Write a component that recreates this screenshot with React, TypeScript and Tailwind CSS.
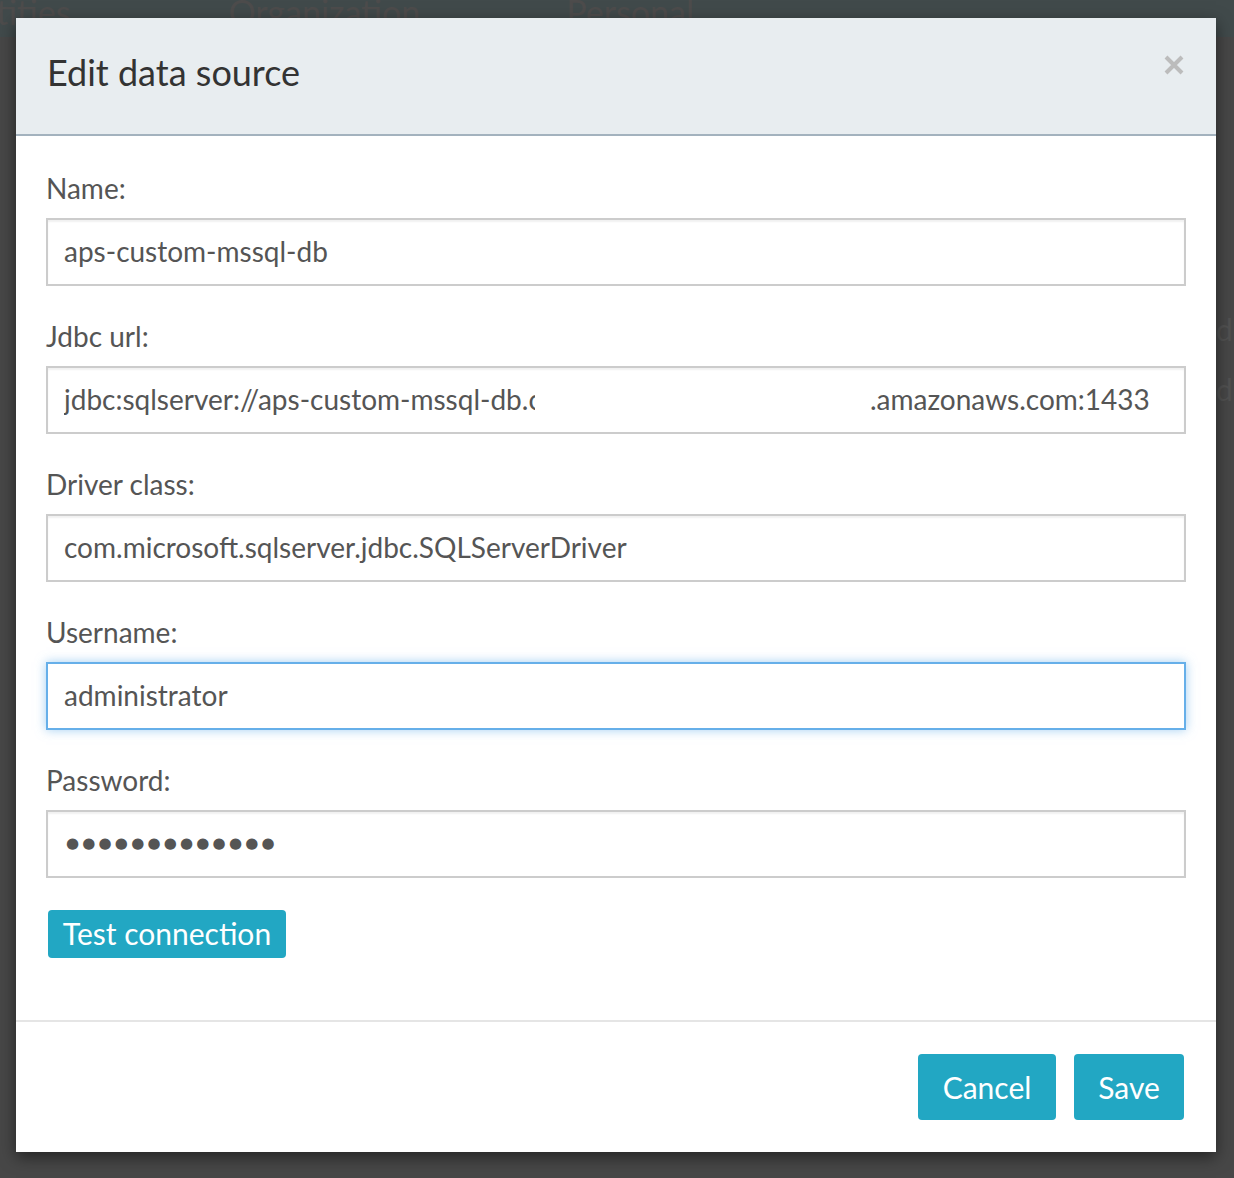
import React from 'react';

const font = { fontFamily: 'Lato, "Open Sans", sans-serif' };

const fields = [
  { label: 'Name:', value: 'aps-custom-mssql-db' },
  { label: 'Jdbc url:', value: 'jdbc' },
  { label: 'Driver class:', value: 'com.microsoft.sqlserver.jdbc.SQLServerDriver' },
  { label: 'Username:', value: 'administrator', focused: true },
  { label: 'Password:', value: 'password' },
];

const Field = ({ label, value, focused }: { label: string; value: string; focused?: boolean }) => {
  let content: React.ReactNode = value;
  if (value === 'jdbc') {
    content = (
      <div className="flex items-center">
        <span className="inline-block w-[471px] overflow-hidden whitespace-nowrap">
          jdbc:sqlserver://aps-custom-mssql-db.c
        </span>
        <span className="inline-block w-[335px]" />
        <span className="whitespace-nowrap">.amazonaws.com:1433</span>
      </div>
    );
  }
  if (value === 'password') {
    content = (
      <span
        className="pl-[2px] text-[15px] tracking-[3.2px] text-[#555]"
        style={{ fontFamily: '"DejaVu Sans", sans-serif' }}
      >
        {'●●●●●●●●●●●●●'}
      </span>
    );
  }
  return (
    <div className="mb-[30px]">
      <div className="h-[40px] leading-[40px] text-[28px] text-[#555] mb-[10px] pb-[2px]">{label}</div>
      <div
        className={
          'h-[68px] flex items-center px-[16px] text-[28px] text-[#555] bg-white border-2 pb-[2px] ' +
          (focused
            ? 'border-[#66afe9] shadow-[0_0_10px_rgba(102,175,233,0.6)]'
            : 'border-[#cccccc] shadow-[inset_0_2px_2px_rgba(0,0,0,0.06)]')
        }
      >
        {content}
      </div>
    </div>
  );
};

export default function App() {
  return (
    <div className="relative h-[1178px] w-[1234px] overflow-hidden bg-[#474747]" style={font}>
      {/* page behind the backdrop */}
      <div className="h-[37px] bg-[#414a4b] flex items-start overflow-hidden text-[34px] leading-[24px] text-[#4d4c4c]">
        <span className="ml-[-42px]">Entities</span>
        <span className="ml-[158px]">Organization</span>
        <span className="ml-[146px]">Personal</span>
      </div>
      <div className="pl-[1216px] pt-[262px] text-[30px] text-[#515151] leading-[60px]">
        <div>d</div>
        <div>db</div>
      </div>

      {/* modal */}
      <div className="absolute left-[16px] top-[18px] w-[1200px] bg-white shadow-[0_5px_15px_rgba(0,0,0,0.5)]">
        <div className="h-[118px] bg-[#e8edf0] border-b-2 border-[#a3b2be] flex items-center justify-between pl-[31px] pr-[32px]">
          <h2 className="text-[36px] text-[#333] leading-none pb-[8px]">Edit data source</h2>
          <svg width="20" height="20" viewBox="0 0 20 20" className="mb-[22px]">
            <path d="M2 2 L18 18 M18 2 L2 18" stroke="#bcbcbc" strokeWidth="4" strokeLinecap="butt" />
          </svg>
        </div>

        <div className="px-[30px] pt-[32px] pb-[32px]">
          {fields.map((f) => (
            <Field key={f.label} label={f.label} value={f.value} focused={f.focused} />
          ))}
          <button className="ml-[2px] mt-[2px] h-[48px] w-[238px] rounded-[4px] bg-[#22a7c3] text-white text-[30px] leading-none pb-[2px]">
            Test connection
          </button>
          <div className="h-[30px]" />
        </div>

        <div className="border-t-2 border-[#e5e5e5] px-[32px] py-[32px] flex justify-end gap-[18px]">
          <button className="h-[66px] w-[138px] rounded-[4px] bg-[#22a7c3] text-white text-[30px] leading-none">
            Cancel
          </button>
          <button className="h-[66px] w-[110px] rounded-[4px] bg-[#22a7c3] text-white text-[30px] leading-none">
            Save
          </button>
        </div>
      </div>
    </div>
  );
}
